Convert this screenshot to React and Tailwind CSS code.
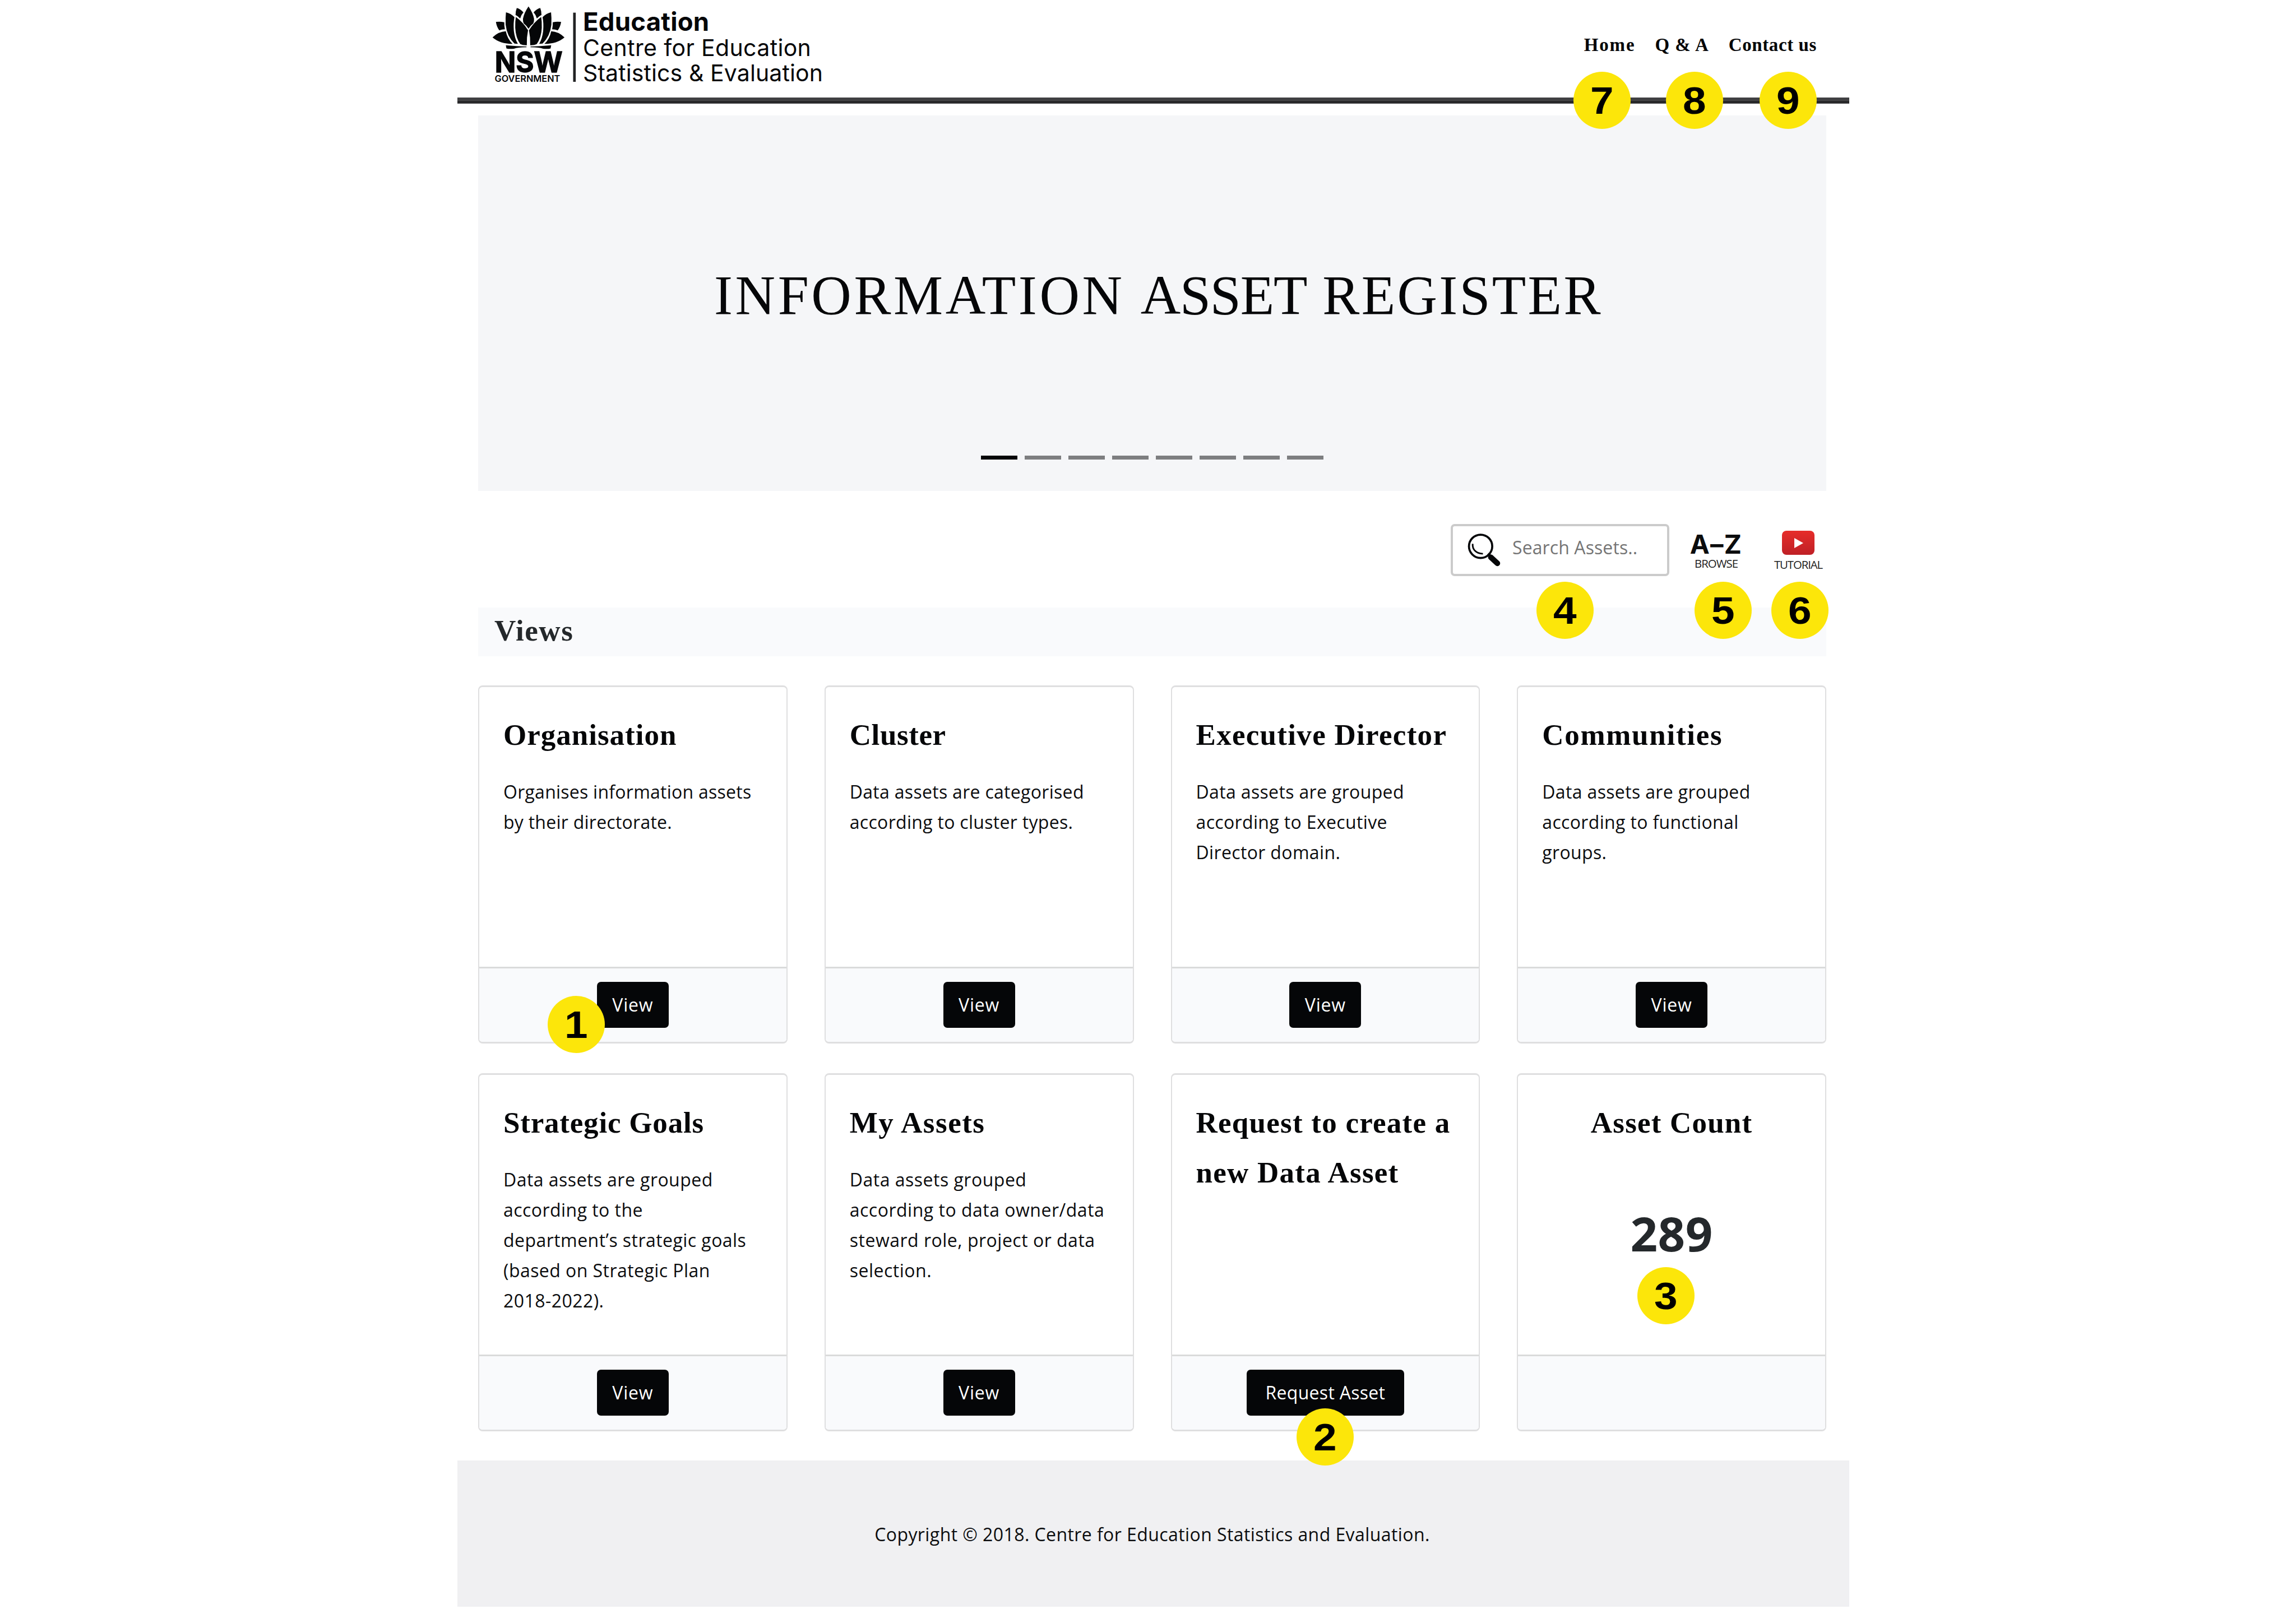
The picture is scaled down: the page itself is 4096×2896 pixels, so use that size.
import React from "react";
import clsx from "clsx";

const SERIF = "font-['Liberation_Serif',serif]";
const SANS = "font-['Open_Sans','Noto_Sans',sans-serif]";

function LotusHalf() {
  return (
    <g>
      <path d="M199 52 Q191 72 191 97 Q207 104 221 120 Q226 98 242 80 Q222 58 199 52 Z" />
      <path d="M129 80 Q160 86 184 112 Q176 150 180 200 Q186 252 206 284 L184 282 Q135 235 127 160 Q125 115 129 80 Z" />
      <path d="M193 110 Q238 142 272 196 Q262 245 264 293 Q238 294 222 286 Q192 245 189 180 Q188 140 193 110 Z" />
      <path d="M64 142 Q92 138 118 144 Q117 168 122 190 Q102 190 86 197 Q68 174 64 142 Z" />
      <path d="M42 242 Q80 204 128 202 Q138 252 172 284 Q90 284 42 242 Z" />
      <path d="M128 293 Q200 300 262 301 L262 306 Q205 306 180 316 Q150 319 132 314 Z" />
    </g>
  );
}

function NswMark() {
  return (
    <svg viewBox="0 0 660 570" className="h-[157px] w-[182px] shrink-0 fill-[#050608]">
      <path d="M275 42 Q246 84 239 122 Q238 140 244 152 Q262 166 275 186 Q288 166 306 152 Q312 140 311 122 Q304 84 275 42 Z" />
      <LotusHalf />
      <g transform="translate(550 0) scale(-1 1)">
        <LotusHalf />
      </g>
      <text x="57" y="467" textLength="439" lengthAdjust="spacingAndGlyphs" stroke="#050608" strokeWidth="5" className="font-['Inter',sans-serif] text-[184px] font-bold">NSW</text>
      <text x="56" y="529" textLength="424" lengthAdjust="spacingAndGlyphs" className="font-['Inter',sans-serif] text-[57px] font-semibold">GOVERNMENT</text>
      <rect x="564" y="82" width="17" height="448" fill="#222324" />
    </svg>
  );
}

function Magnifier() {
  return (
    <svg viewBox="0 0 72 71" className="h-[59px] w-[60px] shrink-0" fill="none" stroke="#050608">
      <circle cx="28" cy="27.5" r="25" strokeWidth="4.5" />
      <path d="M11 22 C10 34 18 43 33 43.5" strokeWidth="3.5" />
      <path d="M44 43 L50 49" strokeWidth="5" />
      <path d="M50 51 L64 64" strokeWidth="12" strokeLinecap="round" />
    </svg>
  );
}

function Header() {
  return (
    <header className="flex h-[174px] items-start justify-between pl-[51px] pr-[58px]">
      <div className="flex">
        <NswMark />
        <div className="-ml-[9px] flex flex-col whitespace-nowrap pt-[16px] font-['Inter',sans-serif] text-[#050608]">
          <span className="text-[45.5px] font-bold leading-[46px] tracking-[0.2px]">Education</span>
          <span className="mt-[1px] text-[41px] leading-[45px] tracking-[0.35px]">Centre for Education</span>
          <span className="text-[41px] leading-[45px] tracking-[0.1px]">Statistics &amp; Evaluation</span>
        </div>
      </div>
      <nav className={clsx(SERIF, "flex gap-[35px] pt-[56px] text-[33px] font-bold leading-[48px] text-[#050608]")}>
        <a className="tracking-[1.9px]">Home</a>
        <a className="tracking-[0.9px]">Q &amp; A</a>
        <a className="tracking-[0.6px]">Contact us</a>
      </nav>
    </header>
  );
}

function Hero() {
  return (
    <section className="ml-[37px] mr-[41px] mt-[21px] flex h-[670px] flex-col justify-between bg-[#f5f6f8] pb-[56px] pt-[266px]">
      <h1 className={clsx(SERIF, "whitespace-nowrap pl-[421px] text-[99px] leading-[110px] tracking-[3.3px] text-[#050608]")}>
        <span className="tracking-[4.6px]">INFORMATION</span> <span className="tracking-[-1.2px]">ASSET</span> REGISTER
      </h1>
      <div className="flex justify-center gap-[13px]">
        {[0, 1, 2, 3, 4, 5, 6, 7].map((i) => (
          <span key={i} className={clsx("h-[7px] w-[65px]", i === 0 ? "bg-[#050608]" : "bg-[#7d7e80]")} />
        ))}
      </div>
    </section>
  );
}

function Toolbar() {
  return (
    <div className="flex h-[208px] items-start justify-end pr-[47px] pt-[59px]">
      <div className="flex h-[93px] w-[390px] items-center gap-[20px] rounded-[7px] border-4 border-[#cbcbcb] bg-white pl-[26px]">
        <Magnifier />
        <span className={clsx(SANS, "whitespace-nowrap pb-[9px] text-[32px] leading-[44px] tracking-[0.1px] text-[#757575]")}>Search Assets..</span>
      </div>
      <div className="ml-[36px] flex w-[95px] flex-col items-center pt-[13px] text-[#0b0c0d]">
        <span className="whitespace-nowrap font-['Inter',sans-serif] text-[47px] font-bold leading-[45px] tracking-[1.2px]">A–Z</span>
        <span className={clsx(SANS, "whitespace-nowrap text-[20.4px] leading-[24px] tracking-[-1px] text-[#222]")}>BROWSE</span>
      </div>
      <div className="ml-[55px] flex w-[88px] flex-col items-center pt-[12px]">
        <span className="flex h-[43px] w-[58px] items-center justify-center rounded-[8px] bg-linear-to-b from-[#e62d2a] to-[#bf2026] pl-[2px]">
          <svg viewBox="0 0 16 18" className="h-[18px] w-[16px] fill-white"><path d="M0 0 L16 9 L0 18 Z" /></svg>
        </span>
        <span className={clsx(SANS, "mt-[5px] whitespace-nowrap text-[20.4px] leading-[24px] tracking-[-1.1px] text-[#222]")}>TUTORIAL</span>
      </div>
    </div>
  );
}

const CARDS = [
  { title: ["Organisation"], tt: "tracking-[1px]", text: ["Organises information assets", "by their directorate."], bt: "tracking-[0.25px]", action: "View" },
  { title: ["Cluster"], tt: "tracking-[0.6px]", text: ["Data assets are categorised", "according to cluster types."], bt: "tracking-[0.3px]", action: "View" },
  { title: ["Executive Director"], tt: "tracking-[1.3px]", text: ["Data assets are grouped", "according to Executive", "Director domain."], bt: "tracking-[0.35px]", action: "View" },
  { title: ["Communities"], tt: "tracking-[1.7px]", text: ["Data assets are grouped", "according to functional", "groups."], bt: "tracking-[0.35px]", action: "View" },
  { title: ["Strategic Goals"], tt: "tracking-[0.8px]", text: ["Data assets are grouped", "according to the", "department’s strategic goals", "(based on Strategic Plan", "2018-2022)."], bt: "tracking-[0.45px]", action: "View" },
  { title: ["My Assets"], tt: "tracking-[1.5px]", text: ["Data assets grouped", "according to data owner/data", "steward role, project or data", "selection."], bt: "tracking-[0.5px]", action: "View" },
  { title: ["Request to create a", "new Data Asset"], tt: "tracking-[1.25px]", text: [], bt: "", action: "Request Asset" },
  { title: ["Asset Count"], tt: "tracking-[1.2px]", text: [], bt: "", count: "289" },
];

function Card({ title, tt, text, bt, action, count }) {
  return (
    <article className="flex h-[639px] flex-col overflow-hidden rounded-[8px] border-x-2 border-y-3 border-[#dfdfe0] bg-white">
      <div className={clsx("flex h-[499px] flex-col whitespace-nowrap pt-[41px]", count ? "items-center" : "pl-[43px]")}>
        <h3 className={clsx(SERIF, tt, "text-[53px] font-bold leading-[88.5px] text-[#050608]")}>
          {title.map((l) => <span key={l} className="block">{l}</span>)}
        </h3>
        {text.length > 0 && (
          <p className={clsx(SANS, bt, "mt-[30px] text-[32px] leading-[54.1px] text-[#0b0c0e]")}>
            {text.map((l) => <span key={l} className="block">{l}</span>)}
          </p>
        )}
        {count && <strong className={clsx(SANS, "mt-[110px] text-[85px] font-bold leading-[85px] tracking-[0.5px] text-[#24282b]")}>{count}</strong>}
      </div>
      <div className="flex grow items-start justify-center border-t-3 border-[#dadbdb] bg-[#f9fafc] pt-[24px]">
        {action && (
          <button className={clsx(SANS, "h-[82px] rounded-[7px] bg-[#050608] text-[32px] leading-[44px] text-white", action === "View" ? "w-[128px] tracking-[0.8px]" : "w-[281px] tracking-[0.3px]")}>
            {action}
          </button>
        )}
      </div>
    </article>
  );
}

const BADGES = [
  [1, 1028, 1828], [2, 2364, 2563.5], [3, 2971.5, 2312], [4, 2791.5, 1089], [5, 3073.5, 1089],
  [6, 3210.5, 1089], [7, 2858, 178.5], [8, 3022.5, 178.5], [9, 3189.5, 178.5],
];

function Badge({ n, x, y }) {
  return (
    <span
      className="absolute flex size-[102px] -translate-x-1/2 -translate-y-1/2 items-center justify-center rounded-full bg-[#fce60a]"
      style={{ left: x, top: y }}
    >
      <b className="inline-block scale-x-[1.1] font-['Liberation_Sans',sans-serif] text-[68px] font-bold leading-[68px] text-black">{n}</b>
    </span>
  );
}

export default function App() {
  return (
    <div className="relative h-[2896px] w-[4096px] overflow-hidden bg-white">
      <div className="ml-[816px] w-[2483px]">
        <Header />
        <div className="h-[11px] bg-[#404042] pt-[7px]"><div className="h-[2px] bg-[#19191b]" /></div>
        <Hero />
        <Toolbar />
        <main className="ml-[37px] mr-[41px]">
          <h2 className={clsx(SERIF, "flex h-[87px] items-center bg-[#f9fafc] pb-[6px] pl-[29px] text-[53px] font-bold leading-[60px] tracking-[1.6px] text-[#24282b]")}>Views</h2>
          <div className="mt-[52px] grid grid-cols-4 gap-x-[66px] gap-y-[53px]">
            {CARDS.map((c) => <Card key={c.title[0]} {...c} />)}
          </div>
        </main>
        <footer className={clsx(SANS, "mt-[52px] h-[261px] whitespace-nowrap bg-[#f0f0f2] pr-[4px] pt-[105px] text-center text-[32px] leading-[54px] tracking-[0.42px] text-[#0b0c0e]")}>
          Copyright © 2018. Centre for Education Statistics and Evaluation.
        </footer>
      </div>
      {BADGES.map(([n, x, y]) => <Badge key={n} n={n} x={x} y={y} />)}
    </div>
  );
}
